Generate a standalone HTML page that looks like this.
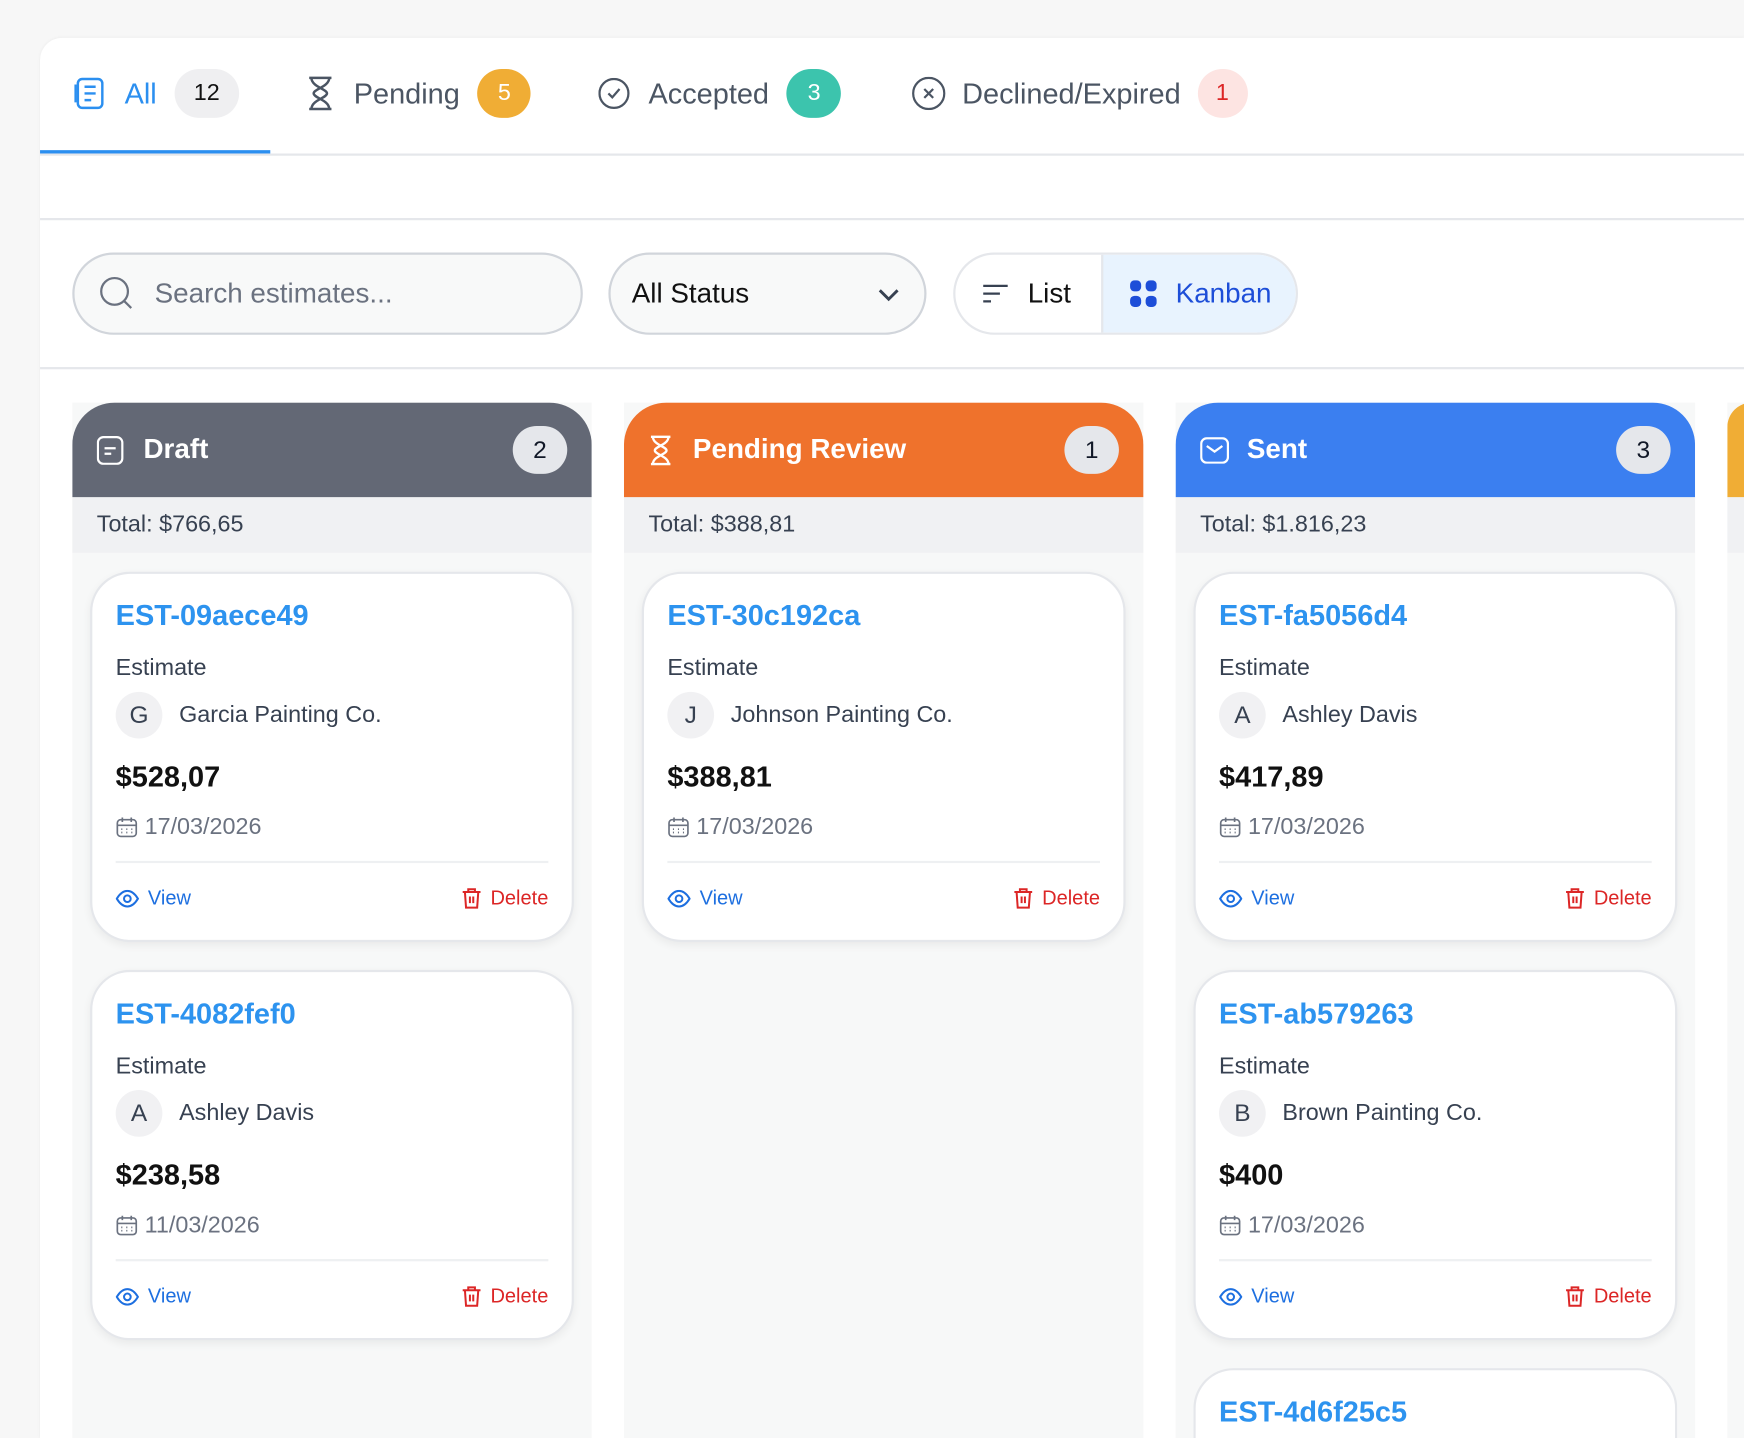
<!DOCTYPE html>
<html><head><meta charset="utf-8"><style>
*{box-sizing:border-box;margin:0;padding:0}
html,body{width:1744px;height:1438px;overflow:hidden;background:#f7f7f7;font-family:"Liberation Sans",Arial,sans-serif}
#w{position:absolute;left:0;top:0;width:1744px;height:1438px;overflow:hidden}
#s{position:absolute;left:0;top:0;width:1568px;height:1293px;overflow:hidden;transform:scale(1.11225);transform-origin:0 0}
.main{position:absolute;left:36px;top:34px;width:1532px;height:1259px;background:#fff;border-top-left-radius:20px;box-shadow:0 0 3px rgba(0,0,0,.05)}
.a{position:absolute}
.tab{position:absolute;top:62px;height:44px;display:flex;align-items:center;font-size:26px;color:#4b5563}
.badge{display:inline-flex;align-items:center;justify-content:center;height:44px;border-radius:22px;font-size:21px}
.line{position:absolute;left:36px;width:1532px;height:2px;background:#e5e7eb}
.box{position:absolute;top:227px;height:74px;border:2px solid #d1d5db;border-radius:37px;background:#f8f9f9;display:flex;align-items:center;font-size:25px}
.col{position:absolute;top:362px;width:467px;height:931px;background:#f7f8f8;overflow:hidden}
.hd{height:85px;border-radius:38px 38px 0 0;display:flex;align-items:center;padding:0 22px;color:#fff;font-size:25px;font-weight:bold;position:relative}
.hd .c{position:absolute;right:22px;top:21px;width:49px;height:43px;border-radius:22px;background:#e5e7eb;color:#111827;font-weight:normal;font-size:22px;display:flex;align-items:center;justify-content:center}
.tot{height:50px;background:#f0f1f3;font-size:21px;color:#374151;padding-left:22px;display:flex;align-items:center}
.card{position:absolute;left:16px;width:435px;height:333px;background:#fff;border:2px solid #e5e7eb;border-radius:36px;box-shadow:0 3px 8px rgba(0,0,0,.06)}
.card .id{position:absolute;left:21px;top:22px;font-size:26px;font-weight:bold;color:#2d93ef}
.card .est{position:absolute;left:21px;top:73px;font-size:21px;color:#374151}
.card .av{position:absolute;left:21px;top:106px;width:42px;height:42px;border-radius:50%;background:#f1f1f3;font-size:22px;color:#374151;display:flex;align-items:center;justify-content:center}
.card .nm{position:absolute;left:78px;top:115px;font-size:21px;color:#374151}
.card .amt{position:absolute;left:21px;top:167px;font-size:26px;font-weight:bold;color:#111}
.card .dt{position:absolute;left:21px;top:216px;font-size:21px;color:#6b7280;display:flex;align-items:center;gap:6px}
.card .dv{position:absolute;left:21px;right:21px;top:258px;height:2px;background:#eef0f2}
.card .vw{position:absolute;left:21px;top:281px;font-size:18px;color:#1d6fe0;display:flex;align-items:center;gap:8px}
.card .dl{position:absolute;right:21px;top:281px;font-size:18px;color:#dc2626;display:flex;align-items:center;gap:8px}
</style></head><body><div id="w"><div id="s">
<div class="main"></div>

<div class="tab" style="left:66px;color:#2b8ff0">
<svg width="30" height="32" viewBox="0 0 30 32" fill="none" stroke="#2b8ff0" stroke-width="2.2"><rect x="4" y="3" width="22" height="26" rx="4"/><path d="M2 8v16M10 10h10M10 16h10M10 22h6"/></svg>
<span style="margin-left:16px">All</span><span class="badge" style="margin-left:16px;width:58px;background:#efeff1;color:#111">12</span></div>
<div class="tab" style="left:276px">
<svg width="24" height="32" viewBox="0 0 24 32" fill="none" stroke="#4b5563" stroke-width="2.2"><path d="M2 2h20M2 30h20M4 2c0 8 14 10 14 14S4 22 4 30M20 2c0 8-14 10-14 14s14 6 14 14"/></svg>
<span style="margin-left:18px">Pending</span><span class="badge" style="margin-left:16px;width:48px;background:#f0ad35;color:#fff">5</span></div>
<div class="tab" style="left:538px">
<svg width="28" height="28" viewBox="0 0 28 28" fill="none" stroke="#4b5563" stroke-width="2"><circle cx="14" cy="14" r="13"/><path d="M9 14l3.5 3.5L19 10"/></svg>
<span style="margin-left:17px">Accepted</span><span class="badge" style="margin-left:16px;width:49px;background:#3cc4ad;color:#fff">3</span></div>
<div class="tab" style="left:820px">
<svg width="30" height="30" viewBox="0 0 30 30" fill="none" stroke="#4b5563" stroke-width="2"><circle cx="15" cy="15" r="14"/><path d="M11 11l8 8M19 11l-8 8"/></svg>
<span style="margin-left:15px">Declined/Expired</span><span class="badge" style="margin-left:15px;width:45px;background:#fde4e2;color:#dc2626">1</span></div>
<div class="a" style="left:36px;top:135px;width:207px;height:3px;background:#2b8ff0"></div>
<div class="line" style="top:138px"></div>
<div class="line" style="top:196px"></div>

<div class="box" style="left:65px;width:459px;padding-left:22px;color:#6b7280">
<svg width="32" height="32" viewBox="0 0 32 32" fill="none" stroke="#6b7280" stroke-width="2"><circle cx="14" cy="14" r="12"/><path d="M23 23l6 6"/></svg>
<span style="margin-left:18px">Search estimates...</span></div>
<div class="box" style="left:547px;width:286px;padding-left:19px;color:#111">All Status
<svg style="position:absolute;right:22px;top:29px" width="20" height="14" viewBox="0 0 20 14" fill="none" stroke="#374151" stroke-width="2.6"><path d="M2 3l8 8 8-8"/></svg></div>
<div class="box" style="left:857px;width:310px;background:#fff;overflow:hidden;border-color:#e5e7eb">
<div style="width:131px;height:100%;display:flex;align-items:center;padding-left:24px;color:#111"><svg width="24" height="18" viewBox="0 0 24 18" stroke="#374151" stroke-width="2"><path d="M1 2h22M1 9h15M1 16h7"/></svg><span style="margin-left:17px">List</span></div>
<div style="flex:1;height:100%;background:#e8f3fe;border-left:2px solid #e5e7eb;display:flex;align-items:center;padding-left:24px;color:#1d4ed8"><svg width="24" height="24" viewBox="0 0 24 24" fill="#1d4ed8"><rect x="0" y="0" width="10" height="10" rx="4"/><rect x="14" y="0" width="10" height="10" rx="4"/><rect x="0" y="14" width="10" height="10" rx="4"/><rect x="14" y="14" width="10" height="10" rx="4"/></svg><span style="margin-left:17px">Kanban</span></div></div>
<div class="line" style="top:330px"></div>

<div class="col" style="left:65px">
<div class="hd" style="background:#636875"><svg width="24" height="26" viewBox="0 0 24 26" fill="none" stroke="#fff" stroke-width="2"><rect x="1" y="1" width="22" height="24" rx="5"/><path d="M7 11h10M7 16h6"/></svg><span style="margin-left:18px">Draft</span><span class="c">2</span></div>
<div class="tot">Total: $766,65</div>
<div class="card" style="top:152px"><div class="id">EST-09aece49</div><div class="est">Estimate</div><div class="av">G</div><div class="nm">Garcia Painting Co.</div><div class="amt">$528,07</div><div class="dt">CAL<span>17/03/2026</span></div><div class="dv"></div><div class="vw">EYE<span>View</span></div><div class="dl">TRASH<span>Delete</span></div></div>
<div class="card" style="top:510px"><div class="id">EST-4082fef0</div><div class="est">Estimate</div><div class="av">A</div><div class="nm">Ashley Davis</div><div class="amt">$238,58</div><div class="dt">CAL<span>11/03/2026</span></div><div class="dv"></div><div class="vw">EYE<span>View</span></div><div class="dl">TRASH<span>Delete</span></div></div>
</div>

<div class="col" style="left:561px">
<div class="hd" style="background:#ef722c"><svg width="22" height="28" viewBox="0 0 24 32" fill="none" stroke="#fff" stroke-width="2.4"><path d="M2 2h20M2 30h20M4 2c0 8 14 10 14 14S4 22 4 30M20 2c0 8-14 10-14 14s14 6 14 14"/></svg><span style="margin-left:18px">Pending Review</span><span class="c">1</span></div>
<div class="tot">Total: $388,81</div>
<div class="card" style="top:152px"><div class="id">EST-30c192ca</div><div class="est">Estimate</div><div class="av">J</div><div class="nm">Johnson Painting Co.</div><div class="amt">$388,81</div><div class="dt">CAL<span>17/03/2026</span></div><div class="dv"></div><div class="vw">EYE<span>View</span></div><div class="dl">TRASH<span>Delete</span></div></div>
</div>

<div class="col" style="left:1057px">
<div class="hd" style="background:#3b7ff0"><svg width="26" height="24" viewBox="0 0 26 24" fill="none" stroke="#fff" stroke-width="2"><rect x="1" y="1" width="24" height="22" rx="5"/><path d="M6 8l7 5 7-5"/></svg><span style="margin-left:16px">Sent</span><span class="c">3</span></div>
<div class="tot">Total: $1.816,23</div>
<div class="card" style="top:152px"><div class="id">EST-fa5056d4</div><div class="est">Estimate</div><div class="av">A</div><div class="nm">Ashley Davis</div><div class="amt">$417,89</div><div class="dt">CAL<span>17/03/2026</span></div><div class="dv"></div><div class="vw">EYE<span>View</span></div><div class="dl">TRASH<span>Delete</span></div></div>
<div class="card" style="top:510px"><div class="id">EST-ab579263</div><div class="est">Estimate</div><div class="av">B</div><div class="nm">Brown Painting Co.</div><div class="amt">$400</div><div class="dt">CAL<span>17/03/2026</span></div><div class="dv"></div><div class="vw">EYE<span>View</span></div><div class="dl">TRASH<span>Delete</span></div></div>
<div class="card" style="top:868px;height:63px;border-bottom:none;border-radius:36px 36px 0 0;box-shadow:none"><div class="id">EST-4d6f25c5</div></div>
</div>

<div class="col" style="left:1553px;width:15px">
<div class="hd" style="background:#f0ad35"></div><div class="tot"></div></div>
</div></div>
<script>
var cal='<svg width="20" height="20" viewBox="0 0 20 20" fill="none" stroke="#6b7280" stroke-width="1.5"><rect x="1.5" y="3" width="17" height="15" rx="3"/><path d="M1.5 8h17M6 1v4M14 1v4M5 11.5h1M9.5 11.5h1M14 11.5h1M5 14.5h1M9.5 14.5h1M14 14.5h1"/></svg>';
var eye='<svg width="21" height="16" viewBox="0 0 21 16" fill="none" stroke="#1d6fe0" stroke-width="1.8"><path d="M1 8c3-5 6-7 9.5-7S17 3 20 8c-3 5-6 7-9.5 7S4 13 1 8z"/><circle cx="10.5" cy="8" r="3"/></svg>';
var tr='<svg width="18" height="20" viewBox="0 0 18 20" fill="none" stroke="#dc2626" stroke-width="1.8"><path d="M1 4h16M6 4V1.5h6V4M3 4l1 14h10l1-14M7.5 8v6M10.5 8v6"/></svg>';
document.querySelectorAll('.dt,.vw,.dl').forEach(function(e){var n=e.firstChild;if(n&&n.nodeType===3){var t=n.textContent;var s=document.createElement('span');s.style.display='flex';s.innerHTML=t==='CAL'?cal:t==='EYE'?eye:tr;e.replaceChild(s,n);}});
</script>
</body></html>
